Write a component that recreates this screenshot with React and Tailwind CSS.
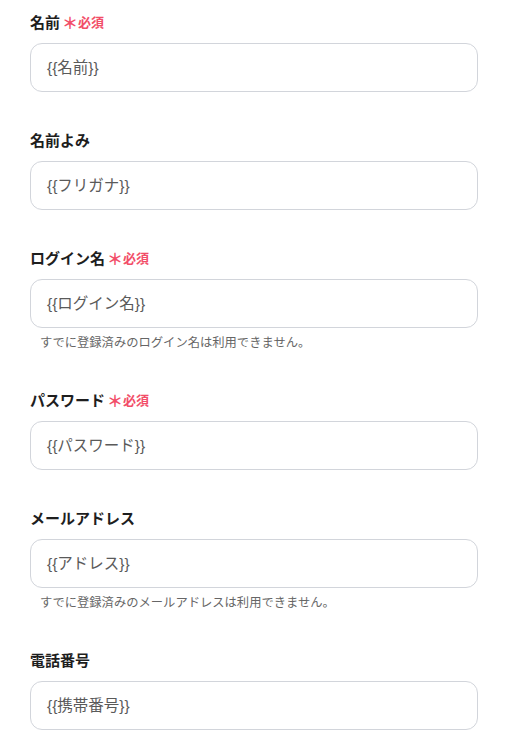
const FIELDS = [
  { label: '名前', required: true, placeholder: '{{名前}}' },
  { label: '名前よみ', placeholder: '{{フリガナ}}' },
  { label: 'ログイン名', required: true, placeholder: '{{ログイン名}}', help: 'すでに登録済みのログイン名は利用できません。' },
  { label: 'パスワード', required: true, placeholder: '{{パスワード}}' },
  { label: 'メールアドレス', placeholder: '{{アドレス}}', help: 'すでに登録済みのメールアドレスは利用できません。' },
  { label: '電話番号', placeholder: '{{携帯番号}}' },
]

function Field({ field }) {
  return (
    <div className="mb-[38px]">
      <div className="flex items-center h-[20px] mb-[11px]">
        <span className="text-[15px] font-bold text-[#1e1e1e]">{field.label}</span>
        {field.required && (
          <span className="flex items-center ml-[2px] text-[#f24d68] font-bold">
            <span className="text-[16px] leading-none">＊</span>
            <span className="text-[13px]">必須</span>
          </span>
        )}
      </div>
      <div className="h-[49px] rounded-[12px] border border-[#d2d5db] bg-white flex items-center pl-[16px]">
        <span
          className="text-[15.5px] text-[#5a5a5a]"
          style={{ fontFamily: '"Liberation Sans", "Noto Sans CJK JP", sans-serif' }}
        >
          {field.placeholder}
        </span>
      </div>
      {field.help && (
        <p className="mt-[6px] h-[18px] pl-[10px] text-[12.3px] leading-[16px] text-[#666]">{field.help}</p>
      )}
    </div>
  )
}

export default function App() {
  return (
    <div
      className="w-[512px] h-[753px] overflow-hidden bg-white pt-[12px] pl-[30px] pr-[34px]"
      style={{ fontFamily: '"Noto Sans CJK JP", "Noto Sans", sans-serif' }}
    >
      {FIELDS.map(f => (
        <Field key={f.label} field={f} />
      ))}
    </div>
  )
}
